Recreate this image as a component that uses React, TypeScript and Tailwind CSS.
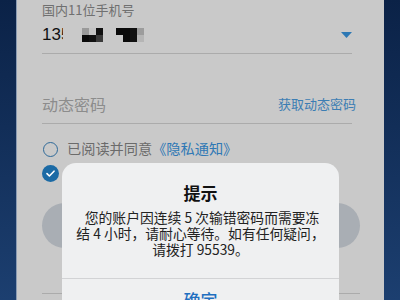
const FONT = { fontFamily: '"Noto Sans CJK SC", "Noto Sans", sans-serif' };

function Pixels({ cells }: { cells: string[][] }) {
  return (
    <div className="flex flex-col">
      {cells.map((row, i) => (
        <div key={i} className="flex">
          {row.map((c, j) => (
            <div key={j} className="h-[7px] w-[7px]" style={{ background: c }} />
          ))}
        </div>
      ))}
    </div>
  );
}

export default function App() {
  return (
    <div
      className="relative h-[300px] w-[400px] overflow-hidden bg-gradient-to-b from-[#0b2247] to-[#1c3f70] px-4"
      style={FONT}
    >
      {/* Login card (dimmed behind alert) */}
      <div className="flex h-full flex-col border-l border-[#8a9bb3] bg-[#c9c9c9] pl-[25px] pr-[32px]">
        <div className="pt-[2px] text-[13px] leading-[16px] text-[#707070]">国内11位手机号</div>

        <div className="mt-[5px] flex h-[24px] items-center">
          <span className="w-[21px] overflow-hidden whitespace-nowrap text-[17px] text-[#111]" style={{ fontFamily: '"Liberation Sans", sans-serif' }}>
            135
          </span>
          <div className="ml-[19px]">
            <Pixels
              cells={[
                ["#9a9a9a", "#c4c4c4", "#111"],
                ["#0a0a0a", "#111", "#3a3a3a"],
              ]}
            />
          </div>
          <div className="ml-[13px]">
            <Pixels
              cells={[
                ["#0a0a0a", "#0a0a0a", "#111", "#9c9c9c"],
                ["#c9c9c9", "#0a0a0a", "#111", "#b5b5b5"],
              ]}
            />
          </div>
          <svg className="ml-auto" width="11" height="6" viewBox="0 0 11 6">
            <path d="M0 0 H11 L5.5 6 Z" fill="#2d78b4" />
          </svg>
        </div>
        <div className="mt-[6px] h-px w-full bg-[#ababab]" />

        <div className="mt-[38px] flex h-[24px] items-center justify-between">
          <span className="text-[16px] text-[#8c8c8c]">动态密码</span>
          <span className="-mr-[4px] text-[13px] text-[#3c7db3]">获取动态密码</span>
        </div>
        <div className="mt-[7px] h-px w-full bg-[#ababab]" />

        <div className="mt-[15px] flex h-[20px] items-center">
          <div className="flex w-[17px] justify-center">
            <div className="h-[15px] w-[15px] rounded-full border-[1.5px] border-[#2f6a99]" />
          </div>
          <span className="ml-[8px] text-[14.2px] text-[#6b6b6b]">
            已阅读并同意<span className="text-[#2f78b5]">《隐私通知》</span>
          </span>
        </div>

        <div className="mt-[4px] flex h-[20px] items-center">
          <div className="flex h-[17px] w-[17px] items-center justify-center rounded-full bg-[#1b6aa5]">
            <svg width="9" height="7" viewBox="0 0 9 7">
              <path d="M1 3.6 L3.4 6 L8 1.2" fill="none" stroke="#fff" strokeWidth="1.6" strokeLinecap="round" strokeLinejoin="round" />
            </svg>
          </div>
        </div>

        <div className="mt-[20px] h-[45px] w-[318px] shrink-0 rounded-full bg-[#a9aeb4]" />
        <div className="mt-[45px] h-px w-[318px] shrink-0 bg-[#ababab]" />
      </div>

      {/* Alert dialog */}
      <div className="absolute left-[62px] top-[163px] w-[277px] rounded-[14px] bg-[#eff0f1] text-center">
        <div className="pt-[19px] text-[17px] font-bold leading-[22px] text-[#111]">提示</div>
        <div className="mt-[5px] px-[12px] text-[13.8px] leading-[16px] text-[#222]">
          &nbsp;您的账户因连续 5 次输错密码而需要冻
          <br />
          结 4 小时，请耐心等待。如有任何疑问，
          <br />
          请拨打 95539。
        </div>
        <div className="mt-[21px] h-px w-full bg-[#d2d3d5]" />
        <div className="pb-[12px] pt-[10px] text-[17px] font-medium leading-[22px] text-[#1f6fc0]">确定</div>
      </div>
    </div>
  );
}
